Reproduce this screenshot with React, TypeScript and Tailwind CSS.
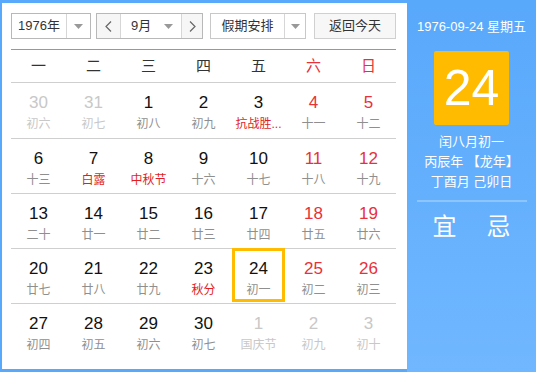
import React from "react";

type Day = {
	d: number;
	l: string;
	other?: boolean;
	weekend?: boolean;
	fest?: boolean;
	sel?: boolean;
};

const weeks: Day[][] = [
	[
		{ d: 30, l: "初六", other: true },
		{ d: 31, l: "初七", other: true },
		{ d: 1, l: "初八" },
		{ d: 2, l: "初九" },
		{ d: 3, l: "抗战胜...", fest: true },
		{ d: 4, l: "十一", weekend: true },
		{ d: 5, l: "十二", weekend: true },
	],
	[
		{ d: 6, l: "十三" },
		{ d: 7, l: "白露", fest: true },
		{ d: 8, l: "中秋节", fest: true },
		{ d: 9, l: "十六" },
		{ d: 10, l: "十七" },
		{ d: 11, l: "十八", weekend: true },
		{ d: 12, l: "十九", weekend: true },
	],
	[
		{ d: 13, l: "二十" },
		{ d: 14, l: "廿一" },
		{ d: 15, l: "廿二" },
		{ d: 16, l: "廿三" },
		{ d: 17, l: "廿四" },
		{ d: 18, l: "廿五", weekend: true },
		{ d: 19, l: "廿六", weekend: true },
	],
	[
		{ d: 20, l: "廿七" },
		{ d: 21, l: "廿八" },
		{ d: 22, l: "廿九" },
		{ d: 23, l: "秋分", fest: true },
		{ d: 24, l: "初一", sel: true },
		{ d: 25, l: "初二", weekend: true },
		{ d: 26, l: "初三", weekend: true },
	],
	[
		{ d: 27, l: "初四" },
		{ d: 28, l: "初五" },
		{ d: 29, l: "初六" },
		{ d: 30, l: "初七" },
		{ d: 1, l: "国庆节", other: true },
		{ d: 2, l: "初九", other: true },
		{ d: 3, l: "初十", other: true },
	],
];

const weekdays = ["一", "二", "三", "四", "五", "六", "日"];

const Caret = () => (
	<svg width="9" height="5" viewBox="0 0 9 5">
		<path d="M0 0h9L4.5 5z" fill="#999" />
	</svg>
);

const Chevron = ({ dir }: { dir: "l" | "r" }) => (
	<svg width="7" height="11" viewBox="0 0 7 11">
		<path
			d={dir === "l" ? "M6 0.5L1 5.5L6 10.5" : "M1 0.5L6 5.5L1 10.5"}
			stroke="#666"
			strokeWidth="1.2"
			fill="none"
		/>
	</svg>
);

const DayCell = ({ day }: { day: Day }) => {
	const numColor = day.other
		? "text-[#c8c8c8]"
		: day.weekend
			? "text-[#e8313a]"
			: "text-[#111]";
	const lunarColor = day.other
		? "text-[#c8c8c8]"
		: day.fest
			? "text-[#e01f1f]"
			: "text-[#8f8f8f]";
	return (
		<div className="relative w-[55px] flex flex-col items-center pt-[9px]">
			{day.sel && (
				<div className="absolute left-px right-px -top-px bottom-px border-[3px] border-[#ffbb00]" />
			)}
			<span className={`text-[17px] leading-[22px] ${numColor}`}>{day.d}</span>
			<span className={`text-[12px] leading-[16px] mt-[2px] ${lunarColor}`}>
				{day.l}
			</span>
		</div>
	);
};

export default function App() {
	return (
		<div
			className="w-[536px] h-[372px] flex bg-[#58a8fb] overflow-hidden"
			style={{ fontFamily: '"Liberation Sans", "Noto Sans CJK SC", sans-serif' }}
		>
			<div className="ml-[2px] mt-[3px] mb-[3px] w-[405px] bg-white px-[9px] pt-[10px]">
				<div className="flex items-center h-[26px] text-[13px] text-[#333]">
					<div className="flex h-full border border-[#b8b8b8]">
						<div className="w-[54px] flex items-center justify-center">1976年</div>
						<div className="w-[24px] flex items-center justify-center border-l border-[#d6d6d6]">
							<Caret />
						</div>
					</div>
					<div className="flex h-full ml-[5px] border border-[#b8b8b8]">
						<div className="w-[24px] flex items-center justify-center bg-[#f6f6f6] border-r border-[#d6d6d6]">
							<Chevron dir="l" />
						</div>
						<div className="w-[60px] flex items-center pl-[10px] pr-[8px] justify-between">
							<span>9月</span>
							<Caret />
						</div>
						<div className="w-[21px] flex items-center justify-center bg-[#f6f6f6] border-l border-[#d6d6d6]">
							<Chevron dir="r" />
						</div>
					</div>
					<div className="flex h-full ml-[7px] border border-[#c8c8c8]">
						<div className="w-[73px] flex items-center justify-center">假期安排</div>
						<div className="w-[21px] flex items-center justify-center border-l border-[#d6d6d6]">
							<Caret />
						</div>
					</div>
					<div className="h-full ml-[8px] w-[82px] flex items-center justify-center border border-[#d0d0d0] bg-[#f7f7f7]">
						返回今天
					</div>
				</div>
				<div className="mt-[10px] w-[385px] border-t border-[#5aa6f0]">
					<div className="flex h-[33px] items-center border-b border-[#cfcfcf]">
						{weekdays.map((w, i) => (
							<div
								key={w}
								className={`w-[55px] text-center text-[15px] ${i > 4 ? "text-[#e8313a]" : "text-[#333]"}`}
							>
								{w}
							</div>
						))}
					</div>
					{weeks.map((week, wi) => (
						<div
							key={wi}
							className={`flex h-[55px] ${wi > 0 ? "border-t border-[#cfcfcf]" : ""}`}
						>
							{week.map((day, di) => (
								<DayCell key={di} day={day} />
							))}
						</div>
					))}
				</div>
			</div>
			<div className="flex-1 flex flex-col items-center bg-gradient-to-b from-[#58a8fb] to-[#70b7ff] text-white">
				<div className="mt-[18px] text-[13px] leading-[18px]">1976-09-24 星期五</div>
				<div className="mt-[15px] w-[75px] h-[74px] rounded-[2px] bg-[#ffbb00] flex items-center justify-center text-[50px] leading-none">
					24
				</div>
				<div className="mt-[7px] text-[13px] leading-[20px] text-center">
					<div>闰八月初一</div>
					<div>丙辰年 【龙年】</div>
					<div>丁酉月 己卯日</div>
				</div>
				<div className="mt-[8px] w-[110px] h-[2px] bg-[#8cc5ff]" />
				<div className="mt-[9px] flex gap-[30px] text-[24px] leading-[32px]">
					<span>宜</span>
					<span>忌</span>
				</div>
			</div>
		</div>
	);
}
